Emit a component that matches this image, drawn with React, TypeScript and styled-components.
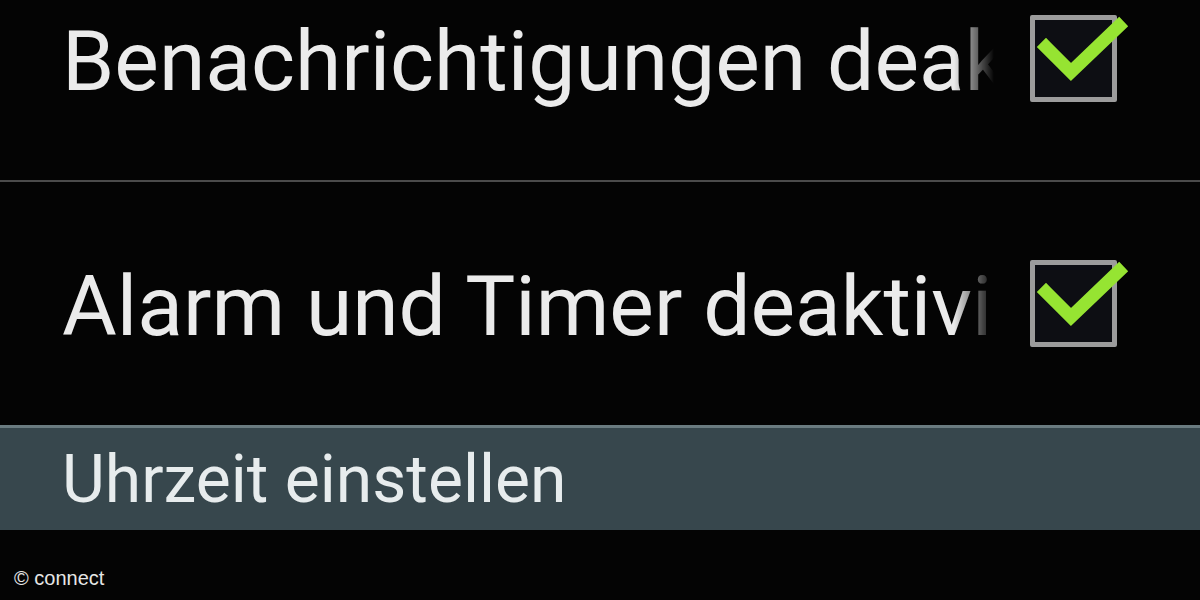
import React from 'react'
import styled, { createGlobalStyle } from 'styled-components'

const GlobalStyle = createGlobalStyle`
  html, body {
    margin: 0;
    padding: 0;
    background: #040404;
  }
  body {
    font-family: Roboto, "Noto Sans", sans-serif;
  }
`

const Screen = styled.div`
  width: 1200px;
  height: 600px;
  overflow: hidden;
  background: #040404;
  display: flex;
  flex-direction: column;
`

const List = styled.div`
  margin-top: -63px;
  display: flex;
  flex-direction: column;
`

const Row = styled.div`
  height: 243px;
  display: flex;
  align-items: center;
  padding: 0 83px 0 62px;
  gap: 36px;
`

const Divider = styled.div`
  height: 2px;
  background: #4b4b4b;
`

const Label = styled.div`
  flex: 1;
  min-width: 0;
  overflow: hidden;
  white-space: nowrap;
  color: #ebebeb;
  font-size: 84px;
  line-height: 1.3;
  padding-top: 6px;
  -webkit-mask-image: linear-gradient(to right, #000 calc(100% - 40px), transparent);
  mask-image: linear-gradient(to right, #000 calc(100% - 40px), transparent);
`

const Box = styled.div`
  position: relative;
  width: 77px;
  height: 77px;
  border: 5px solid #9c9c9c;
  border-radius: 2px;
  background: #0d0e13;
  flex-shrink: 0;
`

const Tick = styled.svg`
  position: absolute;
  left: -5px;
  top: -5px;
  width: 100px;
  height: 80px;
  overflow: visible;
`

const SectionBar = styled.div`
  height: 102px;
  border-top: 3px solid #6a7b80;
  background: #37474d;
  display: flex;
  align-items: center;
  padding-left: 62px;
  color: #e7eced;
  font-size: 66px;
`

const Footer = styled.div`
  flex: 1;
  display: flex;
  align-items: flex-end;
  padding: 0 0 10px 14px;
  color: #e6e6e6;
  font-family: "Liberation Sans", Arial, sans-serif;
  font-size: 20px;
`

const CheckBox: React.FC = () => (
  <Box>
    <Tick viewBox="0 0 100 80">
      <path
        d="M16 32 L41 57 L89 11"
        fill="none"
        stroke="#96e432"
        strokeWidth="13"
        strokeLinecap="square"
        strokeLinejoin="miter"
      />
    </Tick>
  </Box>
)

const App: React.FC = () => {
  return (
    <Screen>
      <GlobalStyle />
      <List>
        <Row>
          <Label>Benachrichtigungen deaktivieren</Label>
          <CheckBox />
        </Row>
        <Divider />
        <Row>
          <Label>Alarm und Timer deaktivieren</Label>
          <CheckBox />
        </Row>
      </List>
      <SectionBar>Uhrzeit einstellen</SectionBar>
      <Footer>© connect</Footer>
    </Screen>
  )
}

export default App
